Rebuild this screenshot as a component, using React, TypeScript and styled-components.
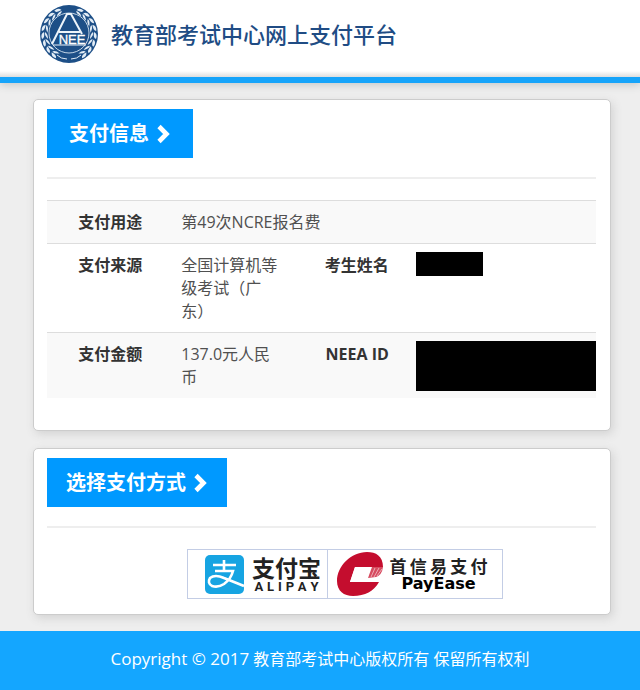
import React from "react";
import styled, { createGlobalStyle } from "styled-components";

const GlobalStyle = createGlobalStyle`
  * { box-sizing: border-box; }
  body {
    margin: 0;
    background: #eeeeee;
    color: #333333;
    font: 16px/23px "Open Sans", "Noto Sans CJK SC", sans-serif;
  }
`;

const Header = styled.header`
  display: flex;
  align-items: center;
  gap: 12px;
  height: 83px;
  padding: 0 39px 10px;
  background: linear-gradient(#ffffff 71px, #dedede 77px);
  border-bottom: 6px solid #16a4fa;
  box-shadow: 0 2px 8px #c4c8c8;
`;

const SiteName = styled.h1`
  margin: 0;
  color: #204c84;
  font-size: 22px;
  font-weight: 500;
  line-height: 32px;
  white-space: nowrap;
`;

const Main = styled.main`
  display: flex;
  flex-direction: column;
  gap: 17px;
  padding: 16px 29px 16px 33px;
`;

const Card = styled.section<{ $bottom: number }>`
  padding: 9px 14px ${(p) => p.$bottom}px 13px;
  background: #ffffff;
  border: 1px solid #cccccc;
  border-radius: 5px;
  box-shadow: 2px 3px 10px #d2d2d2;
`;

const CardTitle = styled.h2<{ $inset: number }>`
  display: flex;
  align-items: center;
  gap: 7px;
  width: fit-content;
  height: 49px;
  margin: 0;
  padding: 0 ${(p) => p.$inset}px;
  background: #0099ff;
  color: #ffffff;
  font-size: 20px;
  font-weight: 700;
  line-height: 28px;
`;

const Divider = styled.hr`
  height: 2px;
  margin: 19px 0 21px;
  border: 0;
  background: #eeeeee;
`;

const InfoTable = styled.table`
  width: 100%;
  table-layout: fixed;
  border-collapse: collapse;
  line-height: 23px;
`;

const Column = styled.col<{ $width: string }>`
  width: ${(p) => p.$width};
`;

const Row = styled.tr`
  border-top: 1px solid #dddddd;
  &:nth-child(odd) { background: #f9f9f9; }
`;

const Label = styled.th<{ $gap: number }>`
  padding: 10px ${(p) => p.$gap}px 9px 0;
  font-weight: 700;
  text-align: right;
  vertical-align: top;
`;

const Value = styled.td`
  padding: 10px 9px 9px 30px;
  color: #505050;
  vertical-align: top;
`;

const MaskedValue = styled.td`
  padding: 8px 0 6px 12px;
  vertical-align: top;
`;

const Mask = styled.div<{ $width: string; $height: number }>`
  width: ${(p) => p.$width};
  height: ${(p) => p.$height}px;
  background: #000000;
`;

const Methods = styled.div`
  display: flex;
  justify-content: center;
  padding-left: 48px;
`;

const Method = styled.button<{ $width: number }>`
  display: flex;
  align-items: center;
  justify-content: center;
  gap: 7px;
  width: ${(p) => p.$width}px;
  height: 50px;
  margin: 0 0 0 -1px;
  padding: 0;
  background: #ffffff;
  border: 1px solid #c3cde5;
  color: #222222;
  cursor: pointer;
`;

const AlipayMethod = styled(Method)`
  padding-left: 10px;
`;

const PayEaseMethod = styled(Method)`
  gap: 6px;
  padding-right: 7px;
`;

const Brand = styled.span`
  display: flex;
  flex-direction: column;
  align-items: center;
`;

const AlipayName = styled.span`
  font: 700 23px/26px "Noto Sans CJK SC", sans-serif;
`;

const AlipayLatin = styled.span`
  display: flex;
  justify-content: space-between;
  width: 64px;
  font: 700 13px/14px Roboto, sans-serif;
`;

const PayEaseName = styled.span`
  display: flex;
  justify-content: space-between;
  width: 98px;
  font: 700 17px/20px "Noto Sans CJK SC", sans-serif;
`;

const PayEaseLatin = styled.span`
  font: 700 16px/16px "DejaVu Sans", sans-serif;
  color: #000000;
`;

const Footer = styled.footer`
  min-height: 60px;
  padding: 16px 16px 21px;
  background: #14a6ff;
  color: #ffffff;
  text-align: center;
`;

const CopyrightYear = styled.span`
  font-size: 17px;
`;

const leafAngles = [22, 39, 56, 73, 90, 107, 124, 141];

const Emblem = () => (
  <svg width="60" height="60" viewBox="0 0 60 60" aria-label="NEEA" role="img">
    <circle cx="30" cy="30" r="29" fill="#1d4f87" />
    {[1, -1].map((side) => (
      <g key={side} transform={side < 0 ? "translate(60 0) scale(-1 1)" : undefined}>
        {leafAngles.map((a) => (
          <g key={a} transform={`rotate(${a} 30 30)`} fill="#e3edf6">
            <path d="M28 5Q30 1 35 3Q34 6 28 5Z" />
            <path d="M28 6Q31 5 35 9Q30 9 28 6Z" />
          </g>
        ))}
        <path d="M32 55Q38 55 42 51" fill="none" stroke="#e3edf6" />
      </g>
    ))}
    <circle cx="30" cy="29" r="20" fill="#1d4f87" stroke="#c5d6e6" />
    <path d="M13 40L28 10H32L43 30M20 28H41" fill="none" stroke="#edf4fa" strokeWidth="2" />
    <path d="M14 41H47" stroke="#edf4fa" />
    <text x="33" y="40" textAnchor="middle" fill="#ffffff" stroke="#ffffff" strokeWidth="0.3" fontFamily="Liberation Sans, sans-serif" fontSize="13">NEE</text>
  </svg>
);

const Chevron = () => (
  <svg width="15" height="20" viewBox="0 0 15 20" aria-hidden="true">
    <path d="M3 2.5L10.500 10L3 17.500" fill="none" stroke="#ffffff" strokeWidth="4.6" />
  </svg>
);

const AlipayMark = () => (
  <svg width="41" height="41" viewBox="0 0 41 41" aria-hidden="true">
    <rect x="1" y="1" width="39" height="39" rx="5" fill="#16a4e2" />
    <path d="M9 11H32M20 6V17M11 17H29Q27 25 20 30Q14 34 8 32Q3 29 6 24Q11 20 20 24L40 32" fill="none" stroke="#ffffff" strokeWidth="2.6" />
  </svg>
);

const PayEaseMark = () => (
  <svg width="48" height="46" viewBox="0 0 48 46" aria-hidden="true">
    <path d="M47 16C47 5 40 1 31 1C15 1 1 15 1 30C1 40 8 45 17 45C29 45 38 40 43 31H14L19 16Z" fill="#c40d2e" />
    <path d="M19 16H36L31 31H14Z" fill="#ffffff" />
    <path d="M36 16H47Q46 24 40 26L32 27Z" fill="#d64b60" />
    <path d="M39 17L35 26M43 17L38 26M46 18L41 25" stroke="#eeabb4" strokeWidth="1" />
  </svg>
);

export default function App() {
  return (
    <>
      <GlobalStyle />
      <Header>
        <Emblem />
        <SiteName>教育部考试中心网上支付平台</SiteName>
      </Header>
      <Main>
        <Card $bottom={32}>
          <CardTitle $inset={22}>支付信息<Chevron /></CardTitle>
          <Divider />
          <InfoTable>
            <colgroup>
              <Column $width="19%" />
              <Column $width="25%" />
              <Column $width="21%" />
              <Column $width="35%" />
            </colgroup>
            <tbody>
              <Row>
                <Label scope="row" $gap={9}>支付用途</Label>
                <Value colSpan={3}>第49次NCRE报名费</Value>
              </Row>
              <Row>
                <Label scope="row" $gap={9}>支付来源</Label>
                <Value>全国计算机等级考试（广东）</Value>
                <Label scope="row" $gap={15}>考生姓名</Label>
                <MaskedValue><Mask $width="67px" $height={24} /></MaskedValue>
              </Row>
              <Row>
                <Label scope="row" $gap={9}>支付金额</Label>
                <Value>137.0元人民币</Value>
                <Label scope="row" $gap={15}>NEEA ID</Label>
                <MaskedValue><Mask $width="100%" $height={50} /></MaskedValue>
              </Row>
            </tbody>
          </InfoTable>
        </Card>
        <Card $bottom={15}>
          <CardTitle $inset={19}>选择支付方式<Chevron /></CardTitle>
          <Divider />
          <Methods>
            <AlipayMethod type="button" $width={141}>
              <AlipayMark />
              <Brand>
                <AlipayName>支付宝</AlipayName>
                <AlipayLatin aria-label="ALIPAY">
                  {Array.from("ALIPAY", (c, i) => <span key={i}>{c}</span>)}
                </AlipayLatin>
              </Brand>
            </AlipayMethod>
            <PayEaseMethod type="button" $width={176}>
              <PayEaseMark />
              <Brand>
                <PayEaseName>
                  {Array.from("首信易支付", (c) => <span key={c}>{c}</span>)}
                </PayEaseName>
                <PayEaseLatin>PayEase</PayEaseLatin>
              </Brand>
            </PayEaseMethod>
          </Methods>
        </Card>
      </Main>
      <Footer>
        <CopyrightYear>Copyright © 2017</CopyrightYear> 教育部考试中心版权所有 保留所有权利
      </Footer>
    </>
  );
}
